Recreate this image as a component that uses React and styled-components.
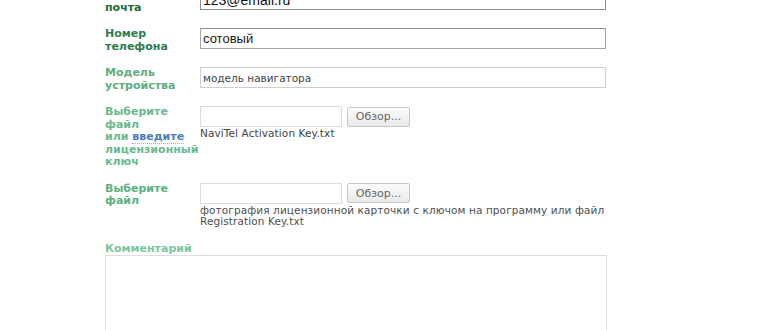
import React from "react";
import styled, { createGlobalStyle } from "styled-components";

const GlobalStyle = createGlobalStyle`
    html, body {
        margin: 0;
        padding: 0;
        background: #fff;
        overflow: hidden;
    }
`;

const Form = styled.form`
    display: flex;
    flex-direction: column;
    width: 502px;
    margin-top: -11px;
    padding-left: 105px;
    font-family: "DejaVu Sans", Verdana, sans-serif;
`;

const Row = styled.div`
    display: flex;
    align-items: flex-start;
    padding-bottom: 14px;
`;

const Label = styled.label`
    width: 95px;
    flex-shrink: 0;
    font-size: 11px;
    font-weight: bold;
    line-height: 12.5px;
    color: ${(p) => p.$color};
`;

const Link = styled.a`
    color: #4a7cbf;
    text-decoration: none;
    border-bottom: 1px dotted #8fb0da;
`;

const Field = styled.div`
    display: flex;
    flex-direction: column;
`;

const Input = styled.input`
    box-sizing: border-box;
    width: 406px;
    height: 21px;
    margin: 0;
    padding: 0 2px;
    border: 1px solid ${(p) => p.$border};
    border-top-color: ${(p) => p.$top || p.$border};
    background: #fff;
    color: ${(p) => p.$text};
    font-family: ${(p) => (p.$verdana ? '"DejaVu Sans", Verdana, sans-serif' : '"Liberation Sans", Arial, sans-serif')};
    font-size: ${(p) => p.$size}px;
    outline: none;
`;

const FileLine = styled.div`
    display: flex;
    align-items: center;
    gap: 5px;
`;

const FileBox = styled.div`
    box-sizing: border-box;
    width: 142px;
    height: 21px;
    border: 1px solid #dcdcdc;
    background: #fff;
`;

const Browse = styled.button`
    box-sizing: border-box;
    width: 63px;
    height: 20px;
    padding: 0;
    border: 1px solid #c8c8c8;
    border-radius: 2px;
    background: linear-gradient(#fbfbfb, #e9e9e9);
    color: #666;
    font-family: "DejaVu Sans", Verdana, sans-serif;
    font-size: 11px;
`;

const Caption = styled.div`
    margin-top: 1px;
    font-size: 10.5px;
    line-height: 11px;
    letter-spacing: 0.1px;
    color: ${(p) => p.$color};
`;

const CommentLabel = styled(Label)`
    width: auto;
    margin-top: 2px;
`;

const TextArea = styled.textarea`
    box-sizing: border-box;
    width: 502px;
    height: 110px;
    margin: 0;
    border: 1px solid #dedede;
    resize: none;
    outline: none;
`;

const App = () => {
    return (
        <>
            <GlobalStyle />
            <Form>
                <Row>
                    <Label $color="#1b6b3c">Электронная почта</Label>
                    <Field>
                        <Input defaultValue="123@email.ru" $border="#8d8d8d" $text="#111" $size={14} />
                    </Field>
                </Row>
                <Row>
                    <Label $color="#2c7d4e">Номер телефона</Label>
                    <Field>
                        <Input defaultValue="сотовый" $border="#a6a6a6" $top="#8f8f8f" $text="#1a1a1a" $size={13} />
                    </Field>
                </Row>
                <Row>
                    <Label $color="#5eae80">Модель устройства</Label>
                    <Field>
                        <Input defaultValue="модель навигатора" $border="#cfcfcf" $text="#444" $size={10.5} $verdana />
                    </Field>
                </Row>
                <Row>
                    <Label $color="#6bb98f">
                        Выберите файл
                        <br />
                        или <Link href="#">введите</Link> лицензионный ключ
                    </Label>
                    <Field>
                        <FileLine>
                            <FileBox />
                            <Browse type="button">Обзор...</Browse>
                        </FileLine>
                        <Caption $color="#444">NaviTel Activation Key.txt</Caption>
                    </Field>
                </Row>
                <Row>
                    <Label $color="#5db07f">Выберите файл</Label>
                    <Field>
                        <FileLine>
                            <FileBox />
                            <Browse type="button">Обзор...</Browse>
                        </FileLine>
                        <Caption $color="#505050">
                            фотография лицензионной карточки с ключом на программу или файл
                            <br />
                            Registration Key.txt
                        </Caption>
                    </Field>
                </Row>
                <CommentLabel $color="#7cc69e">Комментарий</CommentLabel>
                <TextArea />
            </Form>
        </>
    );
};

export default App;
